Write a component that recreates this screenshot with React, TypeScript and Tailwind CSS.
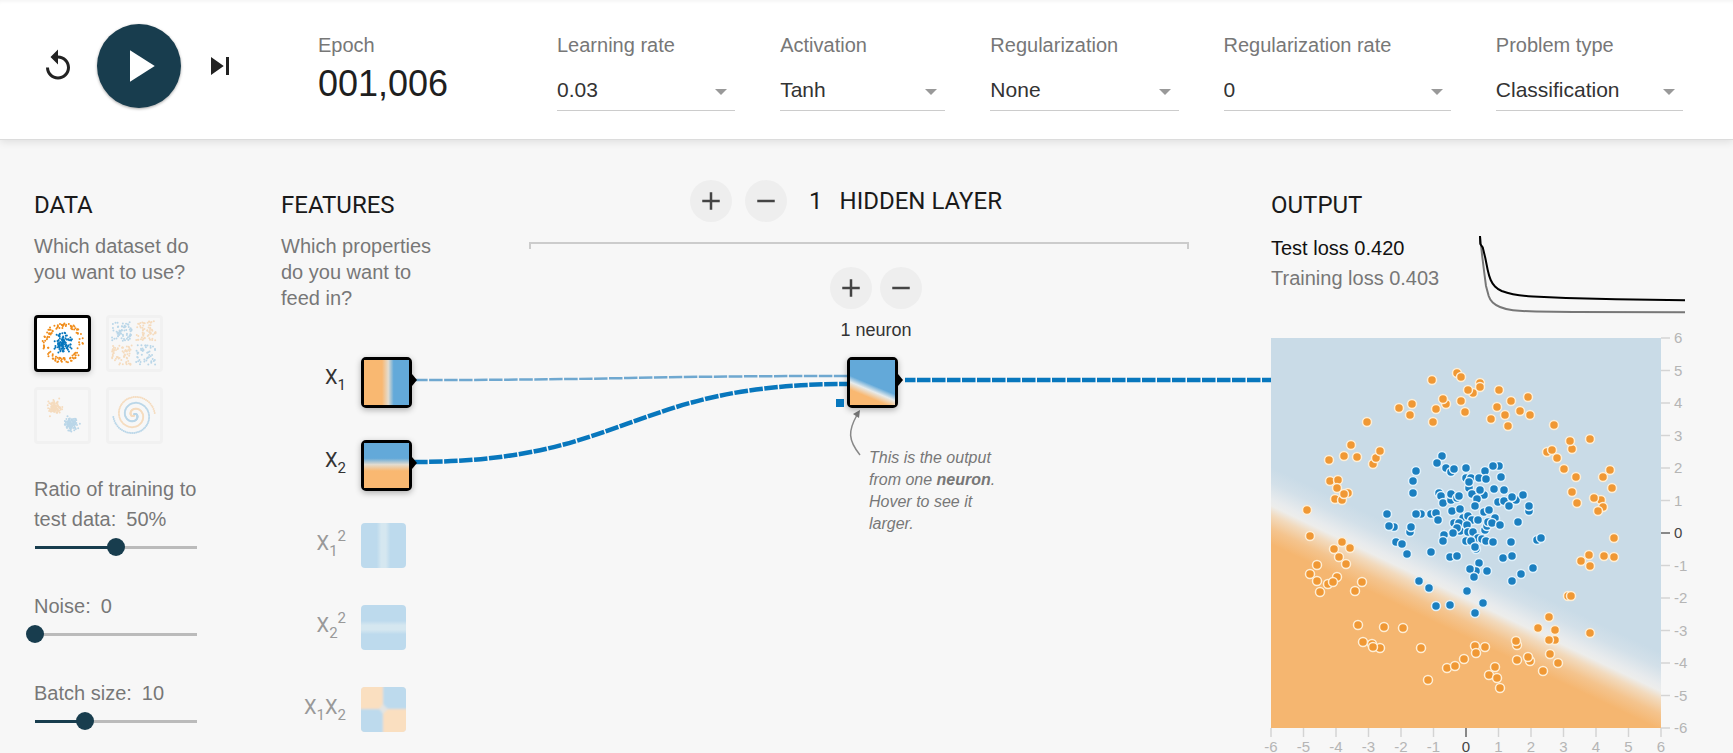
import React, { useState } from "react";

const BLUE = "#0877bd";
const ORANGE = "#f08c1a";

type Pt = [number, number];

const ORANGE_POINTS: Pt[] = [
  [186, 35], [190, 39], [161, 42], [209, 45], [209, 49], [202, 55], [197, 52], [228, 52], [141, 66], [128, 70],
  [139, 77], [175, 66], [172, 61], [165, 71], [190, 63], [194, 74], [226, 69], [220, 81], [162, 84], [96, 84],
  [80, 107], [58, 122], [73, 118], [86, 119], [102, 126], [105, 120], [109, 113], [59, 143], [67, 142], [64, 161],
  [77, 155], [71, 162], [66, 150], [73, 156], [36, 172], [39, 198], [71, 204], [63, 211], [79, 210], [240, 63],
  [257, 59], [234, 77], [237, 88], [249, 73], [259, 77], [283, 87], [319, 101], [301, 111], [299, 103], [276, 114],
  [281, 112], [286, 120], [293, 131], [305, 139], [301, 154], [306, 165], [339, 132], [332, 139], [341, 150],
  [330, 162], [323, 160], [332, 169], [327, 173], [343, 200], [68, 219], [75, 226], [46, 227], [39, 236],
  [46, 243], [66, 239], [57, 246], [62, 244], [49, 254], [91, 244], [84, 253], [87, 287], [113, 289], [132, 290],
  [92, 304], [101, 306], [109, 310], [102, 309], [150, 310], [204, 308], [205, 315], [214, 309], [193, 321],
  [176, 330], [184, 328], [224, 329], [218, 337], [226, 340], [229, 350], [157, 342], [318, 217], [310, 223],
  [319, 228], [333, 218], [343, 219], [297, 258], [300, 258], [278, 279], [267, 290], [284, 292], [319, 295],
  [284, 302], [278, 302], [246, 307], [245, 303], [279, 316], [246, 322], [259, 323], [257, 319], [287, 325],
  [272, 333],
];

const BLUE_POINTS: Pt[] = [
  [171, 118], [166, 125], [145, 133], [142, 143], [142, 155], [175, 130], [180, 134], [183, 131], [195, 130],
  [228, 128], [222, 128], [214, 133], [195, 140], [200, 140], [208, 140], [215, 141], [198, 150], [198, 144],
  [168, 155], [170, 158], [172, 165], [180, 162], [180, 156], [186, 160], [188, 158], [201, 156], [213, 157],
  [209, 152], [206, 161], [223, 151], [204, 168], [227, 164], [181, 173], [189, 171], [116, 176], [150, 176],
  [145, 176], [160, 176], [165, 175], [167, 182], [123, 189], [118, 188], [139, 194], [140, 189], [213, 174],
  [218, 172], [224, 180], [192, 180], [197, 178], [201, 182], [207, 182], [183, 185], [188, 185], [196, 187],
  [189, 193], [186, 190], [182, 195], [173, 197], [172, 203], [197, 194], [202, 194], [214, 192], [216, 188],
  [217, 184], [221, 185], [125, 204], [131, 206], [195, 203], [207, 200], [211, 201], [200, 203], [215, 203],
  [222, 204], [205, 211], [204, 209], [229, 187], [230, 139], [233, 152], [233, 163], [238, 168], [245, 162],
  [241, 159], [252, 157], [258, 173], [258, 168], [247, 184], [240, 204], [266, 202], [270, 200], [136, 216],
  [160, 214], [179, 219], [186, 218], [208, 225], [205, 233], [199, 231], [216, 233], [203, 239], [148, 243],
  [158, 250], [196, 253], [165, 268], [179, 267], [212, 265], [204, 275], [232, 220], [241, 218], [262, 230],
  [250, 236], [241, 243],
];

function seeded(seed: number) {
  let s = seed;
  return () => {
    s = (s * 16807) % 2147483647;
    return s / 2147483647;
  };
}

type Dot = { x: number; y: number; c: string };

function circleDots(): Dot[] {
  const r = seeded(11);
  const out: Dot[] = [];
  for (let i = 0; i < 110; i++) {
    const a = r() * Math.PI * 2;
    const d = r() * 10.5;
    out.push({ x: 26 + d * Math.sin(a), y: 25 + d * Math.cos(a), c: BLUE });
  }
  for (let i = 0; i < 110; i++) {
    const a = r() * Math.PI * 2;
    const d = 15 + r() * 5.5;
    out.push({ x: 26 + d * Math.sin(a), y: 25 + d * Math.cos(a), c: ORANGE });
  }
  return out;
}

function xorDots(): Dot[] {
  const r = seeded(29);
  const out: Dot[] = [];
  for (let i = 0; i < 240; i++) {
    const sx = r() > 0.5 ? 1 : -1;
    const sy = r() > 0.5 ? 1 : -1;
    out.push({
      x: 25 + sx * (2 + r() * 20),
      y: 25 + sy * (2 + r() * 20),
      c: sx * sy > 0 ? BLUE : ORANGE,
    });
  }
  return out;
}

function gaussDots(): Dot[] {
  const r = seeded(47);
  const n = () => (r() + r() + r() + r() - 2) * 5.5;
  const out: Dot[] = [];
  for (let i = 0; i < 110; i++) {
    out.push({ x: 18 + n(), y: 17 + n(), c: ORANGE });
    out.push({ x: 34 + n(), y: 34 + n(), c: BLUE });
  }
  return out;
}

function spiralDots(): Dot[] {
  const out: Dot[] = [];
  for (let i = 0; i < 110; i++) {
    const d = (i / 110) * 21;
    const t = ((1.75 * i) / 110) * 2 * Math.PI;
    out.push({ x: 25 + d * Math.sin(t), y: 25 - d * Math.cos(t), c: BLUE });
    out.push({ x: 25 - d * Math.sin(t), y: 25 + d * Math.cos(t), c: ORANGE });
  }
  return out;
}

const DATASETS = [
  { name: "Circle", dots: circleDots() },
  { name: "Exclusive or", dots: xorDots() },
  { name: "Gaussian", dots: gaussDots() },
  { name: "Spiral", dots: spiralDots() },
];

function Dropdown({ id, label, options }: { id: string; label: string; options: string[] }) {
  return (
    <div className="flex flex-col">
      <label htmlFor={id} className="text-[20px] leading-6 whitespace-nowrap text-[#777]">
        {label}
      </label>
      <div className="relative mt-3">
        <select
          id={id}
          className="block h-[42px] w-full appearance-none border-b border-[#ccc] bg-transparent p-0 text-[21px] text-[#333] outline-none"
        >
          {options.map((o) => (
            <option key={o}>{o}</option>
          ))}
        </select>
        <svg viewBox="0 0 12 6" className="pointer-events-none absolute top-5 right-2 h-[6px] w-3" fill="#999">
          <path d="M0 0h12L6 6z" />
        </svg>
      </div>
    </div>
  );
}

function RoundButton({ minus = false, label }: { minus?: boolean; label: string }) {
  return (
    <button aria-label={label} className="flex size-[42px] shrink-0 items-center justify-center rounded-full bg-[#eee]">
      <svg viewBox="0 0 24 24" className="size-[30px]" fill="#444">
        <path d={minus ? "M19 13H5v-2h14v2z" : "M19 13h-6v6h-2v-6H5v-2h6V5h2v6h6v2z"} />
      </svg>
    </button>
  );
}

type SliderProps = { id: string; label: React.ReactNode; min: number; max: number; initial: number; unit?: string };

function Slider({ id, label, min, max, initial, unit = "" }: SliderProps) {
  const [value, setValue] = useState(initial);
  const f = (value - min) / (max - min);
  const stop = `calc(9px + (100% - 18px) * ${f})`;
  return (
    <div>
      <label htmlFor={id} className="block text-[20px] leading-[30px] text-[#777]">
        {label}
        <span className="ml-[10px]">
          {value}
          {unit}
        </span>
      </label>
      <div className="mt-1 -ml-2 flex h-[18px] w-[180px] items-center">
        <input
          id={id}
          type="range"
          min={min}
          max={max}
          value={value}
          onChange={(e) => setValue(Number(e.target.value))}
          className="m-0 h-[3px] w-full appearance-none outline-none [&::-webkit-slider-thumb]:size-[18px] [&::-webkit-slider-thumb]:appearance-none [&::-webkit-slider-thumb]:rounded-full [&::-webkit-slider-thumb]:bg-[#183d4e]"
          style={{
            background: `linear-gradient(to right, transparent 9px, #183d4e 9px, #183d4e ${stop}, #bbb ${stop}, #bbb calc(100% - 9px), transparent calc(100% - 9px))`,
          }}
        />
      </div>
    </div>
  );
}

function Tile({ active, name, children }: { active?: boolean; name: string; children: React.ReactNode }) {
  return (
    <button
      aria-label={name}
      className={
        active
          ? "relative block shrink-0 rounded-[5px] border-[3px] border-black bg-black shadow-[0_2px_6px_rgba(0,0,0,0.3)]"
          : "relative block shrink-0 overflow-hidden rounded"
      }
    >
      <svg viewBox="0 0 45 45" className="block size-[45px]">
        {children}
      </svg>
      {active && (
        <svg viewBox="0 0 8 12" className="absolute top-[14px] left-[45px] h-3 w-2" fill="#000">
          <path d="M0 0L3 0L8 6L3 12L0 12z" />
        </svg>
      )}
    </button>
  );
}

const sub = "relative top-[6px] text-[15px]";
const sup = "relative bottom-[9px] text-[15px]";

const FEATURES = [
  {
    name: "X1",
    active: true,
    label: <>X<span className={sub}>1</span></>,
    art: <rect width="45" height="45" fill="url(#fx1)" />,
  },
  {
    name: "X2",
    active: true,
    label: <>X<span className={sub}>2</span></>,
    art: <rect width="45" height="45" fill="url(#fx2)" />,
  },
  {
    name: "X1 squared",
    active: false,
    label: <>X<span className={sub}>1</span><span className={sup}>2</span></>,
    art: <rect width="45" height="45" fill="url(#fsq1)" />,
  },
  {
    name: "X2 squared",
    active: false,
    label: <>X<span className={sub}>2</span><span className={sup}>2</span></>,
    art: <rect width="45" height="45" fill="url(#fsq2)" />,
  },
  {
    name: "X1 times X2",
    active: false,
    label: <>X<span className={sub}>1</span>X<span className={sub}>2</span></>,
    art: (
      <>
        <rect width="45" height="45" fill="#e3e4e2" />
        <g filter="url(#soft)">
          <path d="M-9 -9H22V17L18 22H-9z" fill="#fadfc0" />
          <path d="M22 -9H54V22H27L22 17z" fill="#bddaed" />
          <path d="M-9 22H18L22 27V54H-9z" fill="#bddaed" />
          <path d="M27 22H54V54H22V27z" fill="#fadfc0" />
        </g>
      </>
    ),
  },
];

function Gradients() {
  return (
    <svg className="absolute size-0" aria-hidden="true">
      <defs>
        <linearGradient id="fx1">
          <stop offset="0.4" stopColor="#f9b871" />
          <stop offset="0.54" stopColor="#e3dccf" />
          <stop offset="0.66" stopColor="#63a9d9" />
        </linearGradient>
        <linearGradient id="fx2" x2="0" y2="1">
          <stop offset="0.34" stopColor="#63a9d9" />
          <stop offset="0.48" stopColor="#e3dccf" />
          <stop offset="0.62" stopColor="#f9b871" />
        </linearGradient>
        <linearGradient id="fsq1">
          <stop offset="0.35" stopColor="#bddaed" />
          <stop offset="0.45" stopColor="#d5e7f0" />
          <stop offset="0.55" stopColor="#d5e7f0" />
          <stop offset="0.65" stopColor="#bddaed" />
        </linearGradient>
        <linearGradient id="fsq2" x2="0" y2="1">
          <stop offset="0.35" stopColor="#bddaed" />
          <stop offset="0.45" stopColor="#d5e7f0" />
          <stop offset="0.55" stopColor="#d5e7f0" />
          <stop offset="0.65" stopColor="#bddaed" />
        </linearGradient>
        <linearGradient id="neuron" gradientUnits="userSpaceOnUse" x1="25" y1="26" x2="20" y2="38">
          <stop offset="0" stopColor="#63a9d9" />
          <stop offset="0.45" stopColor="#e6ebec" />
          <stop offset="1" stopColor="#f9b871" />
        </linearGradient>
        <linearGradient id="heat" gradientUnits="userSpaceOnUse" x1="208" y1="228" x2="178" y2="291">
          <stop offset="0" stopColor="#c9dbe7" />
          <stop offset="0.2" stopColor="#d3e0e9" />
          <stop offset="0.42" stopColor="#e8ebed" />
          <stop offset="0.5" stopColor="#ededeb" />
          <stop offset="0.62" stopColor="#f2dabd" />
          <stop offset="0.8" stopColor="#f4c48e" />
          <stop offset="1" stopColor="#f5b670" />
        </linearGradient>
        <filter id="soft">
          <feGaussianBlur stdDeviation="1.2" />
        </filter>
      </defs>
    </svg>
  );
}

const TICKS = [-6, -5, -4, -3, -2, -1, 0, 1, 2, 3, 4, 5, 6];

function OutputChart() {
  return (
    <svg viewBox="0 0 414 415" className="block h-[415px] w-[414px] overflow-visible text-[15px]">
      <rect width="390" height="390" fill="url(#heat)" />
      {ORANGE_POINTS.map(([x, y], i) => (
        <circle key={i} cx={x} cy={y} r="4.5" fill="#f09834" stroke="#fdeed6" strokeWidth="1.5" />
      ))}
      {BLUE_POINTS.map(([x, y], i) => (
        <circle key={i} cx={x} cy={y} r="4.5" fill="#1b7fc0" stroke="#e0f1fb" strokeWidth="1.5" />
      ))}
      {TICKS.map((t) => {
        const p = 195 + t * 32.5;
        const zero = t === 0;
        return (
          <g key={t} fill={zero ? "#444" : "#b5b5b5"} stroke="none">
            <line x1={p} x2={p} y1="390" y2="399" stroke={zero ? "#888" : "#d4d4d4"} strokeWidth={zero ? 2 : 1.5} />
            <text x={p} y="414" textAnchor="middle">{t}</text>
            <line x1="390" x2="399" y1={390 - p} y2={390 - p} stroke={zero ? "#888" : "#d4d4d4"} strokeWidth={zero ? 2 : 1.5} />
            <text x="403" y={395 - p}>{t}</text>
          </g>
        );
      })}
    </svg>
  );
}

export default function App() {
  const heading = "font-[Roboto,sans-serif] text-[24px] leading-7 font-normal text-[#1a1a1a]";
  return (
    <div className="min-h-screen bg-[#f7f7f7] font-['Liberation_Sans',Arial,sans-serif] text-[#333]">
      <Gradients />
      <header className="flex items-start border-b border-[#dcdcdc] bg-white pr-[50px] pb-7 pl-10 shadow-[0_2px_8px_rgba(0,0,0,0.1),inset_0_4px_4px_-3px_rgba(0,0,0,0.06)]">
        <div className="mt-6 flex w-[278px] shrink-0 items-center gap-[21px]">
          <button aria-label="Reset the network">
            <svg viewBox="0 0 24 24" className="size-9" fill="#222">
              <path d="M12 5V1L7 6l5 5V7c3.31 0 6 2.69 6 6s-2.69 6-6 6-6-2.69-6-6H4c0 4.42 3.58 8 8 8s8-3.58 8-8-3.58-8-8-8z" />
            </svg>
          </button>
          <button
            aria-label="Run"
            className="flex size-[84px] items-center justify-center rounded-full bg-[#183d4e] shadow-[0_1px_3px_rgba(0,0,0,0.35)]"
          >
            <svg viewBox="0 0 24 24" className="size-[54px]" fill="#fff">
              <path d="M8 5v14l11-7z" />
            </svg>
          </button>
          <button aria-label="Step">
            <svg viewBox="0 0 24 24" className="size-9" fill="#222">
              <path d="M6 18l8.5-6L6 6v12zM16 6v12h2V6h-2z" />
            </svg>
          </button>
        </div>
        <div className="mt-[33px] w-[239px] shrink-0">
          <div className="text-[20px] leading-6 text-[#777]">Epoch</div>
          <div className="mt-[7px] text-[36px] leading-10 text-[#1f1f1f]">001,006</div>
        </div>
        <div className="mt-[33px] grid flex-1 grid-cols-[178fr_165fr_188fr_227fr_187fr] gap-[45px]">
          <Dropdown id="lr" label="Learning rate" options={["0.03", "0.1", "0.3"]} />
          <Dropdown id="act" label="Activation" options={["Tanh", "ReLU", "Sigmoid", "Linear"]} />
          <Dropdown id="reg" label="Regularization" options={["None", "L1", "L2"]} />
          <Dropdown id="regrate" label="Regularization rate" options={["0", "0.001", "0.01"]} />
          <Dropdown id="problem" label="Problem type" options={["Classification", "Regression"]} />
        </div>
      </header>

      <main className="flex items-start pt-10 pl-[34px]">
        <section className="w-[247px] shrink-0 pt-[11px]">
          <h2 className={heading}>DATA</h2>
          <p className="mt-[14px] w-[165px] text-[20px] leading-[26px] text-[#777]">Which dataset do you want to use?</p>
          <div className="mt-[30px] grid w-[129px] grid-cols-2 gap-[15px]">
            {DATASETS.map((d, i) => (
              <button
                key={d.name}
                aria-label={d.name}
                className={
                  i === 0
                    ? "rounded border-[3px] border-black bg-white shadow-[0_2px_6px_rgba(0,0,0,0.2)]"
                    : "rounded border-[3px] border-[#f1f1f1]"
                }
              >
                <svg viewBox="0 0 51 51" className={i === 0 ? "block w-full" : "block w-full opacity-25"}>
                  {d.dots.map((p, k) => (
                    <circle key={k} cx={p.x} cy={p.y} r="1" fill={p.c} />
                  ))}
                </svg>
              </button>
            ))}
          </div>
          <div className="mt-[30px] flex flex-col gap-[35px]">
            <Slider id="ratio" label={<>Ratio of training to<br />test data:</>} min={10} max={90} initial={50} unit="%" />
            <Slider id="noise" label="Noise:" min={0} max={50} initial={0} />
            <Slider id="batch" label="Batch size:" min={1} max={30} initial={10} />
          </div>
        </section>

        <section className="w-[131px] shrink-0 pt-[11px]">
          <h2 className={heading}>FEATURES</h2>
          <p className="mt-[14px] w-[155px] text-[20px] leading-[26px] text-[#777]">
            Which properties do you want to feed in?
          </p>
          <ul className="mt-[46px] flex flex-col gap-8">
            {FEATURES.map((f) => (
              <li key={f.name} className={f.active ? "flex h-[51px] items-start" : "flex h-[50px] items-start"}>
                <span
                  className={
                    f.active
                      ? "mr-[15px] w-[65px] shrink-0 text-right font-[Roboto,sans-serif] text-[20px] leading-[41px] text-[#333]"
                      : "mr-[15px] w-[65px] shrink-0 text-right font-[Roboto,sans-serif] text-[20px] leading-[41px] text-[#999]"
                  }
                >
                  {f.label}
                </span>
                <Tile active={f.active} name={f.name}>
                  {f.art}
                </Tile>
              </li>
            ))}
          </ul>
        </section>

        <section className="min-w-0 flex-1">
          <div className="mr-[82px] ml-[117px]">
            <div className="flex items-center justify-center pr-[26px]">
              <RoundButton label="Add layer" />
              <span className="w-[13px]" />
              <RoundButton minus label="Remove layer" />
              <span className={`${heading} ml-[22px]`}>1</span>
              <h2 className={`${heading} ml-[17px] whitespace-nowrap`}>HIDDEN LAYER</h2>
            </div>
            <div className="mt-5 h-[7px] border-x-2 border-t-2 border-[#ccc]" />
          </div>
          <div className="mt-[18px] flex items-start">
            <svg viewBox="0 0 435 134" preserveAspectRatio="none" className="mt-[90px] h-[134px] min-w-0 flex-[435]" fill="none">
              <path d="M2 23C217 23 217 19 435 19" stroke="#6fa8d0" strokeWidth="2.5" strokeDasharray="13.5 1.5" vectorEffect="non-scaling-stroke" />
              <path d="M2 105C217 105 217 27 435 27" stroke={BLUE} strokeWidth="4.5" strokeDasharray="13.5 1.5" vectorEffect="non-scaling-stroke" />
            </svg>
            <div className="flex w-[58px] shrink-0 flex-col items-center">
              <div className="flex gap-2">
                <RoundButton label="Add neuron" />
                <RoundButton minus label="Remove neuron" />
              </div>
              <div className="mt-[9px] text-[18px] leading-6 whitespace-nowrap text-[#333]">1 neuron</div>
              <div className="relative mt-[15px] self-start">
                <Tile active name="Neuron">
                  <rect width="45" height="45" fill="url(#neuron)" />
                </Tile>
                <span className="absolute bottom-[1px] -left-[11px] size-2 bg-[#0877bd]" />
              </div>
              <div className="flex items-start self-start">
                <svg viewBox="0 0 22 52" className="h-[52px] w-[22px] shrink-0" fill="none">
                  <path d="M13 47C1 32 1 23 10 7" stroke="#888" strokeWidth="1.5" />
                  <path d="M13 2L12 10L6 6z" fill="#777" />
                </svg>
                <p className="mt-[39px] w-[136px] shrink-0 text-[16px] leading-[22px] text-[#777] italic">
                  <span className="block">This is the output</span>
                  <span className="block">
                    from one <b>neuron</b>.
                  </span>
                  <span className="block">Hover to see it</span>
                  <span className="block">larger.</span>
                </p>
              </div>
            </div>
            <svg viewBox="0 0 366 134" preserveAspectRatio="none" className="mt-[90px] h-[134px] min-w-0 flex-[366]" fill="none">
              <path d="M-3 23H366" stroke={BLUE} strokeWidth="4.5" strokeDasharray="13.5 1.5" vectorEffect="non-scaling-stroke" />
            </svg>
          </div>
        </section>

        <section className="w-[462px] shrink-0 pt-[11px]">
          <h2 className={heading}>OUTPUT</h2>
          <div className="mt-[14px] mb-[23px] flex w-[414px] items-start justify-between">
            <div className="text-[20px] leading-[30px]">
              <div className="text-[#111]">Test loss 0.420</div>
              <div className="text-[#777]">Training loss 0.403</div>
            </div>
            <svg viewBox="0 0 207 82" className="h-[82px] w-[207px]" fill="none" strokeWidth="2" strokeLinejoin="round">
              <path
                d="M2 3L3 12L4.3 24L6.3 40L8 53L10.700 63Q12 67 14.700 69.500Q18 72.500 22 74Q28 76.500 35 77.200Q45 78.200 58 78.500L95 79L207 79.300"
                stroke="#777"
              />
              <path
                d="M2 3L2.300 11L4.700 14.300L7.300 25L9.700 37Q11 43 12.700 47Q14.500 51 17 53.500Q20 56.500 23.700 58Q29 60 35 61.200Q44 62.800 55 63.500L88 65L138 66.300L207 67.300"
                stroke="#000"
              />
            </svg>
          </div>
          <OutputChart />
        </section>
      </main>
    </div>
  );
}
